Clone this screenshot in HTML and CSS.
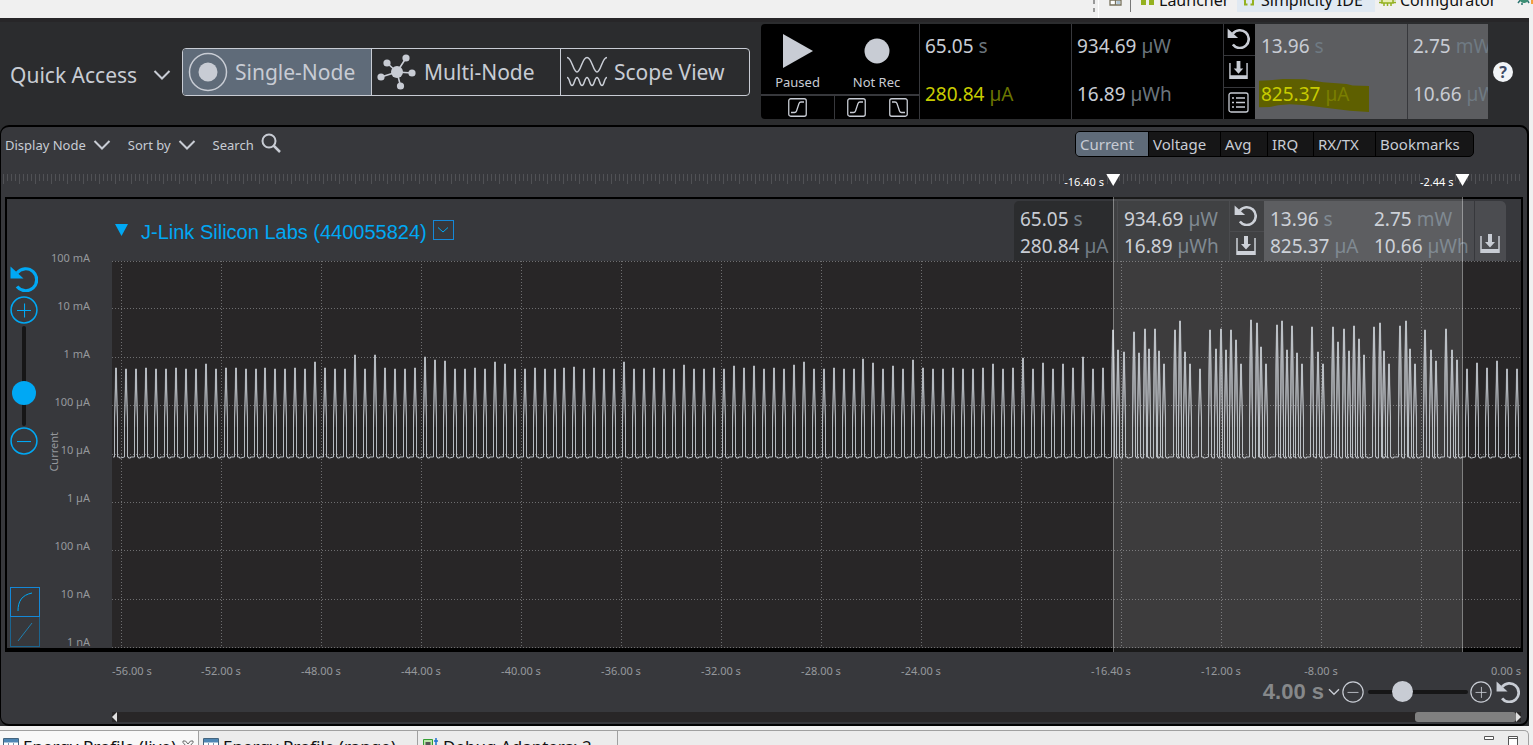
FILE: index.html
```html
<!DOCTYPE html>
<html lang="en">
<head>
<meta charset="utf-8">
<title>Energy Profiler</title>
<link rel="stylesheet" href="styles.css">
</head>
<body>
<svg class="defs" aria-hidden="true">
  <symbol id="undo" viewBox="0 0 28 26"><path d="M.5 .5V12.500H13.500Z" fill="currentColor"/><path d="M7 7A11 11 0 1 1 7 20.500" fill="none" stroke="currentColor" stroke-width="3.200"/></symbol>
  <symbol id="save" viewBox="0 0 20 20"><path d="M1 2V19M19 2V19" stroke="currentColor" stroke-width="1.500"/><path d="M1 15H19V19H1Z" fill="currentColor"/><path d="M8 0H12V8H15L10 13.500L5 8H8Z" fill="currentColor"/></symbol>
  <symbol id="chev" viewBox="0 0 18 12"><path d="M1.500 2L9 9.500L16.500 2" fill="none" stroke="currentColor" stroke-width="2"/></symbol>
  <symbol id="plus" viewBox="0 0 26 26"><circle cx="13" cy="13" r="12" fill="none" stroke="currentColor" stroke-width="1.400"/><path d="M6.500 13.500H19.500M13.500 7V20" stroke="currentColor"/></symbol>
  <symbol id="minus" viewBox="0 0 26 26"><circle cx="13" cy="13" r="12" fill="none" stroke="currentColor" stroke-width="1.400"/><path d="M6.500 13.500H19.500" stroke="currentColor"/></symbol>
  <symbol id="rise" viewBox="0 0 19 19"><rect x=".75" y=".75" width="17.500" height="17.500" rx="2" fill="none" stroke="currentColor" stroke-width="1.300"/><path d="M3 14.500H6.500Q8 14.500 8.500 13L11 5.500Q11.500 4 13 4H16" fill="none" stroke="currentColor" stroke-width="1.300"/></symbol>
  <symbol id="sheet" viewBox="0 0 16 16"><path d="M.5 .5H15.500V15.500H.5Z" fill="#fff" stroke="#44657f"/><path d="M1 1H15V4.500H1Z" fill="#4e86b4"/><path d="M1 8.500H15M1 12H15M5.500 5V15M10.500 5V15" stroke="#7e95a8"/></symbol>
</svg>

<div class="ide-bar">
  <span class="grip"></span>
  <button class="ide-open" aria-label="Open perspective"><svg width="13" height="16" viewBox="0 0 13 16"><path d="M1 2H12V14H1ZM6.500 2V14M1 9H12" fill="#fff" stroke="#77715c" stroke-width="1.300"/><path d="M7.500 10H11V13H7.500Z" fill="#aec4d4"/></svg></button>
  <button class="ide-item launcher"><svg width="14" height="16" viewBox="0 0 14 16"><path d="M0 2H5V15H0ZM8 2H13V15H8Z" fill="#94b120"/></svg>Launcher</button>
  <button class="ide-item active"><svg width="12" height="16" viewBox="0 0 12 16"><path d="M4.500 2H2V8L1 9L2 10V14.500H4.500M7.500 2H10V8L11 9L10 10V14.500H7.500" fill="none" stroke="#94b120" stroke-width="2"/></svg>Simplicity IDE</button>
  <button class="ide-item config"><svg width="17" height="16" viewBox="0 0 17 16"><path d="M3 3H14V13H3Z" fill="#e6edb0" stroke="#94b120" stroke-width="1.500"/><path d="M0 9.500H3M0 12.500H3M14 9.500H17M14 12.500H17M5 13V16M8.500 13V16M12 13V16" stroke="#94b120" stroke-width="1.500"/></svg>Configurator</button>
  <button class="ide-item bug" aria-label="Debug"><svg width="18" height="16" viewBox="0 0 18 16"><path d="M3 5L7 8L3 13M15 5L11 8L14 13M7 13V15M2 9H6" stroke="#2b7370" fill="none" stroke-width="1.500"/><circle cx="9" cy="9" r="4" fill="#3d8f74"/><path d="M16 0H18V14H16Z" fill="#f4a03c"/></svg></button>
</div>

<div class="app">
  <header class="head">
    <button class="quick">Quick Access <svg width="18" height="12"><use href="#chev"/></svg></button>
    <nav class="views">
      <button class="view on"><svg width="40" height="40" viewBox="0 0 40 40"><circle cx="20" cy="20" r="18.500" fill="none" stroke="#c8ccd4" stroke-width="1.500"/><circle cx="20" cy="20" r="9.500" fill="#c8ccd4"/></svg>Single-Node</button>
      <button class="view multi"><svg width="40" height="36" viewBox="0 0 40 36"><g stroke="#c8ccd4" stroke-width="1.600"><path d="M20 18L29 4M20 18L10 9M20 18L4 23M20 18L35 19M20 18L23.500 32"/></g><g fill="#c8ccd4"><circle cx="20" cy="18" r="6"/><circle cx="29" cy="4" r="3.600"/><circle cx="10" cy="9" r="3.600"/><circle cx="4" cy="23" r="3.600"/><circle cx="35" cy="19" r="3.600"/><circle cx="23.500" cy="32" r="3.600"/></g></svg>Multi-Node</button>
      <button class="view scope"><svg width="42" height="32" viewBox="0 0 42 32"><g fill="none" stroke="#c8ccd4" stroke-width="1.500"><path d="M1 1.500C6 1.500 7 16 11 16S16 1.500 21 1.500S27 16 31 16S36 1.500 41 1.500"/><path d="M1 21.500C4 21.500 3.500 29.500 6 29.500S8.500 21.500 11 21.500S13.500 29.500 16 29.500S18.500 21.500 21 21.500S23.500 29.500 26 29.500S28.500 21.500 31 21.500S33.500 29.500 36 29.500S38 21.500 41 21.500"/></g></svg>Scope View</button>
    </nav>
    <section class="meter">
      <div class="transport">
        <button class="tbtn"><svg width="32" height="36" viewBox="0 0 32 36"><path d="M1 1L31 18L1 35Z" fill="#c8ccd4"/></svg>Paused</button>
        <button class="tbtn"><svg width="32" height="36" viewBox="0 0 32 36"><circle cx="16" cy="18" r="12.500" fill="#c8ccd4"/></svg>Not Rec</button>
        <div class="trig"><button aria-label="Start trigger"><svg width="19" height="19"><use href="#rise"/></svg></button></div>
        <div class="trig two"><button aria-label="Record on rising edge"><svg width="19" height="19"><use href="#rise"/></svg></button><button aria-label="Record on falling edge"><svg class="flip" width="19" height="19"><use href="#rise"/></svg></button></div>
      </div>
      <div class="stat"><p>65.05 <i>s</i></p><p class="hot">280.84 <i>µA</i></p></div>
      <div class="stat"><p>934.69 <i>µW</i></p><p>16.89 <i>µWh</i></p></div>
      <div class="tools">
        <button aria-label="Reset"><svg width="23" height="21"><use href="#undo"/></svg></button>
        <button aria-label="Save"><svg width="19" height="19"><use href="#save"/></svg></button>
        <button aria-label="List"><svg width="21" height="21" viewBox="0 0 21 21"><rect x="1" y="1" width="19" height="19" rx="2" fill="none" stroke="#c8ccd4" stroke-width="1.300"/><path d="M4 6H6M4 10.500H6M4 15H6M8 6H17M8 10.500H17M8 15H17" stroke="#c8ccd4" stroke-width="1.500"/></svg></button>
      </div>
      <div class="stat sel"><svg class="marker-pen" viewBox="568 237 329 98" preserveAspectRatio="none"><path d="M568 242L600 241L640 237L705 238L760 247L830 252L848 256L897 258V335L840 331L760 322L700 314L660 312L625 315L600 320L568 321Z" fill="#5e5f00"/></svg><p>13.96 <i>s</i></p><p class="hot">825.37 <i>µA</i></p></div>
      <div class="stat sel last"><p>2.75 <i>mW</i></p><p>10.66 <i>µWh</i></p></div>
    </section>
    <button class="help" aria-label="Help">?</button>
  </header>

  <main class="panel">
    <div class="bar">
      <button class="menu">Display Node <svg width="18" height="12"><use href="#chev"/></svg></button>
      <button class="menu">Sort by <svg width="18" height="12"><use href="#chev"/></svg></button>
      <button class="menu search">Search <svg width="20" height="20" viewBox="0 0 20 20"><circle cx="8" cy="8" r="6.500" fill="none" stroke="#c8ccd4" stroke-width="2"/><path d="M12.500 12.500L19 19" stroke="#c8ccd4" stroke-width="2.500"/></svg></button>
      <div class="tabs">
        <button class="on">Current</button><button>Voltage</button><button>Avg</button><button>IRQ</button><button>RX/TX</button><button>Bookmarks</button>
      </div>
    </div>
    <div class="ruler">
      <div class="marks">
        <div class="mark from"><span>-16.40 s</span><svg width="14" height="12"><path d="M0 0H14L7 12Z" fill="#fff"/></svg></div>
        <div class="mark to"><span>-2.44 s</span><svg width="14" height="12"><path d="M0 0H14L7 12Z" fill="#fff"/></svg></div>
      </div>
    </div>

    <section class="frame">
      <div class="rail">
        <button aria-label="Reset scale"><svg width="28" height="26"><use href="#undo"/></svg></button>
        <button aria-label="Zoom in"><svg width="28" height="28"><use href="#plus"/></svg></button>
        <input class="vrange" type="range" aria-label="Vertical zoom" value="28">
        <button aria-label="Zoom out"><svg width="28" height="28"><use href="#minus"/></svg></button>
        <div class="scale">
          <button aria-label="Logarithmic"><svg width="22" height="22" viewBox="0 0 22 22"><path d="M4 20C4 10 8 4 18 2" fill="none" stroke="#00a8f4"/></svg></button>
          <button class="off" aria-label="Linear"><svg width="22" height="22" viewBox="0 0 22 22"><path d="M4 20L18 2" stroke="#1f7fb0"/></svg></button>
        </div>
      </div>
      <div class="yaxis">
        <span class="yname">Current</span>
        <div class="ylabels"><span>100 mA</span><span>10 mA</span><span>1 mA</span><span>100 µA</span><span>10 µA</span><span>1 µA</span><span>100 nA</span><span>10 nA</span><span>1 nA</span></div>
      </div>
      <div class="chart">
        <div class="title">
          <svg width="13" height="12"><path d="M0 0H13L6.500 12Z" fill="#00a8f4"/></svg>
          <h1>J-Link Silicon Labs (440055824)</h1>
          <button class="drop" aria-label="Device options"><svg width="10" height="6"><path d="M0 .5L5 5L10 .5" fill="none" stroke="#00a8f4"/></svg></button>
          <div class="strip">
            <div class="s1"><p>65.05 <i>s</i></p><p>280.84 <i>µA</i></p></div>
            <div class="s2"><p>934.69 <i>µW</i></p><p>16.89 <i>µWh</i></p></div>
            <div class="s3"><button aria-label="Reset"><svg width="23" height="21"><use href="#undo"/></svg></button><button aria-label="Save"><svg width="20" height="20"><use href="#save"/></svg></button></div>
            <div class="s4"><p>13.96 <i>s</i></p><p>825.37 <i>µA</i></p></div>
            <div class="s5"><p>2.75 <i>mW</i></p><p>10.66 <i>µWh</i></p></div>
            <div class="s6"><button aria-label="Save selection"><svg width="20" height="20"><use href="#save"/></svg></button></div>
          </div>
        </div>
        <svg class="plot" id="plot" viewBox="0 0 1409 387" preserveAspectRatio="none" role="img" aria-label="Current over time"></svg>
        <div class="range"></div>
      </div>
    </section>

    <div class="xaxis"><span class="first">-56.00 s</span><span>-52.00 s</span><span>-48.00 s</span><span>-44.00 s</span><span>-40.00 s</span><span>-36.00 s</span><span>-32.00 s</span><span>-28.00 s</span><span>-24.00 s</span><span></span><span class="early">-16.40 s</span><span>-12.00 s</span><span>-8.00 s</span><span></span><span class="end">0.00 s</span></div>
    <div class="zoom">
      <button class="span">4.00 s <svg width="12" height="8"><use href="#chev"/></svg></button>
      <button aria-label="Zoom out"><svg width="22" height="22"><use href="#minus"/></svg></button>
      <input class="hrange" type="range" aria-label="Horizontal zoom" value="30">
      <button aria-label="Zoom in"><svg width="22" height="22"><use href="#plus"/></svg></button>
      <button aria-label="Reset zoom"><svg width="24" height="22"><use href="#undo"/></svg></button>
    </div>
    <div class="scroll"><svg width="5" height="10"><path d="M5 0V10L0 5Z" fill="#e0e0e0"/></svg><span class="thumb"></span><svg width="5" height="10"><path d="M0 0V10L5 5Z" fill="#e0e0e0"/></svg></div>
  </main>
</div>

<footer class="dock">
  <button class="dtab live"><svg width="16" height="16"><use href="#sheet"/></svg>Energy Profile (live)<svg class="x" width="12" height="12" viewBox="0 0 12 12"><path d="M1 1H3.500L6 4L8.500 1H11V2.500L8 6L11 9.500V11H8.500L6 8L3.500 11H1V9.500L4 6L1 2.500Z" fill="none" stroke="#666"/></svg></button>
  <button class="dtab prof"><svg width="16" height="16"><use href="#sheet"/></svg>Energy Profile (range)</button>
  <button class="dtab debug"><svg width="16" height="16" viewBox="0 0 16 16"><path d="M.5 1.500H9.500V13H.5Z" fill="#b9e6a8" stroke="#35a035"/><path d="M2.500 4H7.500V9H2.500Z" fill="#555"/><path d="M13 0V7M11 3H15M10 10H13V5" stroke="#1c72d0" stroke-width="1.500" fill="none"/></svg>Debug Adapters: 2</button>
  <div class="win"><button aria-label="Minimize"><svg width="10" height="10"><path d="M.5 .5H9.500V3.500H.5Z" fill="#fff" stroke="#555"/></svg></button><button aria-label="Maximize"><svg width="10" height="10"><path d="M.5 .5H9.500V9.500H.5ZM0 2.500H10" fill="#fff" stroke="#555"/></svg></button></div>
</footer>
<script src="plot.js"></script>
</body>
</html>
```
FILE: plot.js
```js
// Spikes are [x, y] in plot units; the idle current sits at BASE.
const BASE = 196;
const tall = {9: 103, 11: 107, 20: 101, 24: 94, 26: 94, 31: 96, 32: 99, 33: 100, 38: 101, 39: 103, 46: 106,
  51: 101, 57: 104, 62: 105, 64: 105, 68: 104, 69: 101, 75: 98, 76: 102, 78: 105, 80: 99, 88: 103,
  91: 97, 93: 102, 95: 103, 97: 96};
const spikes = [];
for (let i = 0; i < 100; i++) {
  spikes.push([4 + i * 10 - Math.round(i / 30), tall[i] || (i % 3 ? 108 : 107)]);
}
const burst = [[1,69],[6,89],[12,91],[22,71],[27,92],[33,68],[37,88],[43,68],[47,90],[52,103],[63,69],[68,60],
  [73,91],[78,103],[88,108],[98,69],[104,88],[109,68],[114,89],[119,69],[124,79],[129,103],[139,59],[145,62],
  [149,86],[154,103],[165,64],[170,60],[175,89],[180,65],[185,92],[190,103],[200,66],[206,91],[211,103],
  [221,66],[226,81],[232,68],[237,90],[242,65],[247,78],[252,94],[262,66],[268,62],[272,90],[277,103],
  [288,65],[294,60],[298,88],[303,103],[313,69],[319,89],[324,100],[334,68],[340,89],[345,99],[355,108],
  [365,102],[375,107],[385,100],[395,108],[405,108]];
burst.forEach(([x, y]) => spikes.push([1000 + x, y]));

let fill = '';
let line = `M1 ${BASE}`;
spikes.forEach(([x, y], i) => {
  line += `L${x - 1.5} ${BASE}V${BASE - 40}L${x - 0.5} ${y + 20}V${y}H${x + 0.5}V${y + 20}L${x + 1.5} ${BASE - 40}V${BASE}`;
  line += i % 3 ? 'h1v1h2v-1' : 'h2v1h1';
  fill += `M${x - 2} ${BASE - 30}V${y + 45}L${x - 1} ${y + 5}H${x + 1}L${x + 2} ${y + 45}V${BASE - 30}Z`;
});
line += 'H1409';
let grid = '';
[0.5, 47.5, 96.5, 144.5, 193.5, 241.5, 289.5, 338.5, 386.5].forEach(y => { grid += `M0 ${y}H1409`; });
for (let x = 9.5; x < 1409; x += 100) grid += `M${x} 0V387`;

document.getElementById('plot').innerHTML =
  `<defs><linearGradient id="fade" gradientUnits="userSpaceOnUse" x1="0" y1="60" x2="0" y2="170">
    <stop offset="0" stop-color="#b0b4b9" stop-opacity=".7"/><stop offset=".65" stop-color="#9a9da2" stop-opacity=".55"/>
    <stop offset="1" stop-color="#8a8d92" stop-opacity="0"/></linearGradient></defs>
  <path class="grid" d="${grid}"/><path fill="url(#fade)" d="${fill}"/><path class="line" d="${line}"/>`;
```
FILE: styles.css
```css
* { box-sizing: border-box; }
body {
  margin: 0; height: 100vh; overflow: hidden; display: flex; flex-direction: column;
  background: #f0f0f0; color: #c8ccd4; font-family: "Noto Sans", "Open Sans", sans-serif;
}
button { font: inherit; color: inherit; background: none; border: 0; padding: 0; margin: 0; white-space: nowrap; }
p, h1 { margin: 0; font-weight: normal; }
i { font-style: normal; color: #6b757d; }
svg { flex: none; display: block; }
.defs { position: absolute; width: 0; height: 0; }

.ide-bar { flex: none; height: 18px; overflow: hidden; display: flex; justify-content: flex-end; color: #111; font-size: 16px; }
.ide-bar > * { flex: none; }
.grip { width: 6px; height: 18px; border-right: 1px solid #fff; background: repeating-linear-gradient(#999 0 4px, transparent 4px 8px) 0 0 / 2px 12px no-repeat; }
.ide-open { height: 12px; padding: 0 8px 0 10px; border-right: 1px solid #777; overflow: hidden; display: flex; align-items: flex-start; }
.ide-open svg { margin-top: -9px; }
.ide-item { display: flex; align-items: center; gap: 6px; height: 24px; margin-top: -12px; }
.ide-item svg { margin-top: -4px; }
.launcher { width: 106px; padding-left: 10px; gap: 4px; }
.active { width: 138px; padding-left: 6px; background: #e0e9f2; }
.config { width: 136px; padding-left: 4px; gap: 4px; }
.bug { width: 22px; padding-left: 4px; }

.app { flex: 1; min-height: 0; margin-right: 4px; background: #2b2c2e; display: flex; flex-direction: column; }
.head { flex: none; height: 107px; border-top: 4px solid #272628; padding: 0 16px 4px 10px; display: flex; align-items: center; }
.quick { width: 172px; font-size: 21px; display: flex; align-items: center; justify-content: space-between; padding: 6px 11px 0 0; }
.views { display: flex; width: 568px; height: 48px; border: 1px solid #c8ccd4; border-radius: 4px; overflow: hidden; }
.view { flex: 1; display: flex; align-items: center; gap: 7px; padding-left: 5px; font-size: 21px; }
.view.scope { gap: 6px; }
.view + .view { border-left: 1px solid #c8ccd4; }
.view.on { background: #5f6b79; }

.meter { flex: 1; min-width: 0; height: 95px; margin-left: 11px; display: flex; overflow: hidden; background: #000; border-radius: 4px 0 0 4px; }
.transport { flex: none; width: 158px; display: grid; grid-template: 72px 23px / 73px 85px; }
.tbtn { display: flex; flex-direction: column; align-items: center; gap: 3px; padding-top: 9px; font-size: 13px; line-height: 20px; border-bottom: 2px solid #37383c; }
.trig { display: flex; align-items: center; justify-content: center; }
.two { border-left: 1px solid #37383c; gap: 23px; }
.flip { transform: scaleX(-1); }
.stat { flex: none; position: relative; width: 152px; padding-left: 5px; border-left: 1px solid #37383c; font-size: 19px; line-height: 44px; display: grid; grid-template-rows: 48px 47px; white-space: nowrap; }
.stat p { position: relative; }
.hot { color: #c8cc00; }
.hot i { color: #6b7500; }
.sel { background: #5c5d60; border-color: #5c5d60; }
.sel i { color: #6f7a83; }
.sel .hot i { color: #7a7e00; }
.last { flex: 1; min-width: 0; border-color: #37383c; overflow: hidden; }
.marker-pen { position: absolute; left: 3px; top: 55px; width: 110px; height: 33px; }
.tools { flex: none; width: 32px; border-left: 1px solid #37383c; display: grid; grid-template-rows: 31px 32px 32px; }
.tools button { display: grid; place-items: center; padding: 0 2px 2px 0; }
.tools button + button { border-top: 1px solid #37383c; }
.help { width: 20px; height: 20px; margin-left: 5px; border-radius: 50%; background: #f1f4f7; color: #3d4b66; font-size: 16px; font-weight: bold; line-height: 20px; }

.panel { flex: 1; min-height: 0; display: flex; flex-direction: column; background: #37383c; border: 2px solid #000; border-left-width: 1px; border-radius: 9px; }
.bar { flex: none; height: 35px; display: flex; align-items: center; padding: 0 53px 2px 4px; font-size: 13px; }
.menu { display: flex; align-items: center; gap: 7px; margin: 2px 17px 0 0; }
.search svg { margin-top: -4px; }
.tabs { margin-left: auto; display: grid; grid-template-columns: 72px 72px 47px 46px 62px 98px; height: 26px; border: 1px solid #000; border-radius: 5px; overflow: hidden; background: #161617; font-size: 15px; line-height: 22px; }
.tabs button { padding: 0 0 0 4px; text-align: left; }
.tabs button + button { border-left: 1px solid #000; }
.tabs .on { background: #5f6b79; }

.ruler {
  flex: none; position: relative; height: 35px;
  background:
    repeating-linear-gradient(90deg, #505155 0 1px, transparent 1px 16px) 2px 12px / calc(100% - 9px) 10px no-repeat,
    repeating-linear-gradient(90deg, #505155 0 1px, transparent 1px 4px) 2px 12px / calc(100% - 9px) 7px no-repeat;
}
.marks { position: absolute; left: 111px; right: 6px; top: 12px; height: 14px; }
.mark { position: absolute; display: flex; gap: 2px; color: #fff; font-size: 11px; line-height: 16px; transform: translateX(-100%); margin-left: 7px; white-space: nowrap; }
.mark span { background: #37383c; }
.from { left: 71.04%; }
.to { left: 95.85%; }

.frame { flex: 1; min-height: 0; margin: 0 4px; border: 2px solid #000; border-bottom-width: 4px; display: flex; }
.rail { flex: none; width: 37px; padding: 67px 3px 1px 3px; color: #00a8f4; display: flex; flex-direction: column; align-items: flex-start; }
.rail > button { width: 28px; }
.rail > button + button { margin-top: 4px; }
input[type=range] { -webkit-appearance: none; appearance: none; background: transparent; margin: 0; }
.rail .vrange { writing-mode: vertical-lr; direction: rtl; width: 24px; height: 100px; margin: 2px 0 1px 2px; }
.vrange::-webkit-slider-runnable-track { width: 4px; height: 100%; background: #161617; border-radius: 2px; }
.vrange::-webkit-slider-thumb { -webkit-appearance: none; width: 24px; height: 24px; margin-left: -10px; border-radius: 50%; background: #00a8f4; }
.scale { margin-top: auto; display: flex; flex-direction: column; }
.scale button { width: 30px; height: 30px; border: 1px solid #1488d8; display: grid; place-items: center; }
.scale .off { border-color: #1c6590; border-top: 0; }
.yaxis { flex: none; width: 68px; overflow: hidden; padding: 51px 22px 0 0; display: flex; font-size: 11px; color: #96989c; }
.yname { writing-mode: vertical-rl; transform: rotate(180deg); line-height: 16px; width: 16px; flex: none; margin: 182px -2px 0 2px; align-self: flex-start; }
.ylabels { flex: 1; display: flex; flex-direction: column; justify-content: space-between; align-items: flex-end; line-height: 16px; margin: 0 0 -2px -10px; white-space: nowrap; }
.chart { flex: 1; min-width: 0; position: relative; display: flex; flex-direction: column; }
.title { flex: none; height: 62px; display: flex; align-items: center; padding: 2px 15px 0 3px; color: #00a8f4; }
.title > svg, .drop { margin-bottom: 2px; }
.title h1 { font: 20px/24px "Liberation Sans", Arial, sans-serif; margin: 2px 6px 0 13px; white-space: nowrap; }
.drop { width: 21px; height: 20px; border: 1px solid #1488d8; display: grid; place-items: center; }
.strip { margin-left: auto; height: 60px; display: flex; border-radius: 5px 5px 0 0; overflow: hidden; background: #2b2c2e; color: #c8ccd4; font-size: 19px; line-height: 27px; white-space: nowrap; }
.strip > div { padding: 5px 0 0 6px; }
.strip i { color: #727d86; }
.strip .s1 { width: 103px; }
.strip .s2 { width: 112px; border-left: 1px solid #37383c; }
.strip .s3 { width: 35px; padding: 0; border-left: 1px solid #37383c; display: grid; grid-template-rows: 30px 30px; }
.s3 button { display: grid; place-items: center; padding: 0 3px 2px 0; }
.s3 button + button { border-top: 1px solid #37383c; }
.strip .s4 { width: 104px; background: #4b4c50; }
.strip .s5 { width: 106px; background: #4b4c50; }
.strip .s6 { width: 32px; background: #4b4c50; border-left: 1px solid #37383c; padding: 33px 0 0 5px; }
.plot { flex: 1; min-height: 0; width: 100%; background: #282627; }
.plot path { vector-effect: non-scaling-stroke; }
.grid { fill: none; stroke: #6e6e70; stroke-dasharray: 1 2; shape-rendering: crispEdges; }
.line { fill: none; stroke: #b4b9bf; stroke-width: 1; }
.range { position: absolute; top: -2px; bottom: -4px; left: 71.04%; width: 24.85%; background: rgba(255, 255, 255, .1); border: solid rgba(255, 255, 255, .35); border-width: 0 1px; pointer-events: none; }

.xaxis { flex: none; height: 28px; margin: 0 6px 0 111px; display: grid; grid-template-columns: 59fr repeat(13, 100fr) 50fr; font-size: 11px; line-height: 38px; color: #96989c; white-space: nowrap; text-align: center; }
.xaxis .first { text-align: left; }
.xaxis .early { padding-right: 20px; }
.xaxis .end { text-align: right; }
.zoom { flex: none; height: 24px; margin: 0 7px 0 0; display: flex; justify-content: flex-end; align-items: center; }
.span { display: flex; align-items: center; gap: 4px; margin-right: 2px; font: bold 22px/24px "Liberation Sans", Arial, sans-serif; color: #86888a; }
.span svg { color: #c8ccd4; }
.hrange { width: 100px; height: 21px; }
.zoom .hrange { margin: 0 2px 0 4px; }
.hrange::-webkit-slider-runnable-track { height: 4px; background: #161617; border-radius: 2px; }
.hrange::-webkit-slider-thumb { -webkit-appearance: none; width: 21px; height: 21px; margin-top: -9px; border-radius: 50%; background: #c8ccd4; }
.zoom button:last-child { margin-left: 4px; }
.scroll { flex: none; height: 10px; margin: 8px 6px 2px 111px; display: flex; background: #282627; }
.thumb { width: 101px; margin-left: auto; background: #808080; border-radius: 3px; }

.dock { flex: none; height: 15px; margin: 4px 4px 0 0; overflow: hidden; display: flex; align-items: flex-start; border-top: 1px solid #a0a0a0; border-right: 1px solid #a0a0a0; border-top-right-radius: 5px; background: #ececec; color: #111; font-size: 17px; }
.dtab { flex: none; display: flex; align-items: center; gap: 4px; height: 30px; padding-left: 3px; border-right: 1px solid #a0a0a0; }
.live { background: #f8f8f8; width: 199px; }
.prof { width: 219px; padding-left: 4px; }
.debug { width: 200px; padding-left: 5px; }
.x { margin-left: 2px; }
.win { margin-left: auto; display: flex; gap: 14px; padding: 5px 10px 0 0; }
```
